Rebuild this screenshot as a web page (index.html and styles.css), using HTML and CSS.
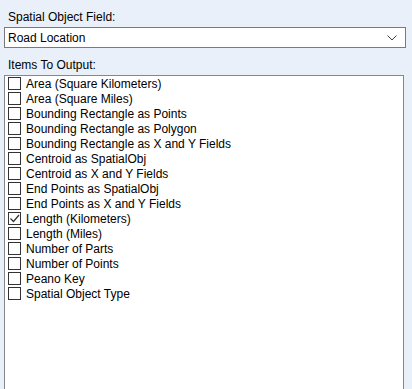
FILE: index.html
```html
<!DOCTYPE html>
<html>
<head>
<meta charset="utf-8">
<link rel="stylesheet" href="styles.css">
</head>
<body>
<div class="panel">
  <div class="label">Spatial Object Field:</div>
  <div class="combo">
    <span class="combo-text">Road Location</span>
    <svg class="chev" width="10" height="6" viewBox="0 0 10 6"><path d="M0.5 0.5 L5 5 L9.5 0.5" fill="none" stroke="#444" stroke-width="1"/></svg>
  </div>
  <div class="label label2">Items To Output:</div>
  <div class="list">
    <div class="item"><span class="cb"></span>Area (Square Kilometers)</div>
    <div class="item"><span class="cb"></span>Area (Square Miles)</div>
    <div class="item"><span class="cb"></span>Bounding Rectangle as Points</div>
    <div class="item"><span class="cb"></span>Bounding Rectangle as Polygon</div>
    <div class="item"><span class="cb"></span>Bounding Rectangle as X and Y Fields</div>
    <div class="item"><span class="cb"></span>Centroid as SpatialObj</div>
    <div class="item"><span class="cb"></span>Centroid as X and Y Fields</div>
    <div class="item"><span class="cb"></span>End Points as SpatialObj</div>
    <div class="item"><span class="cb"></span>End Points as X and Y Fields</div>
    <div class="item"><span class="cb checked"><svg width="11" height="11" viewBox="0 0 11 11"><path d="M1.5 5.5 L4.5 8.5 L10 2" fill="none" stroke="#333" stroke-width="1.2"/></svg></span>Length (Kilometers)</div>
    <div class="item"><span class="cb"></span>Length (Miles)</div>
    <div class="item"><span class="cb"></span>Number of Parts</div>
    <div class="item"><span class="cb"></span>Number of Points</div>
    <div class="item"><span class="cb"></span>Peano Key</div>
    <div class="item"><span class="cb"></span>Spatial Object Type</div>
  </div>
</div>
</body>
</html>
```
FILE: styles.css
```css
html, body {
  margin: 0;
  padding: 0;
  background: #eaf0fa;
  height: 100%;
  overflow: hidden;
}
.panel {
  box-sizing: border-box;
  height: 100%;
  font-family: "Liberation Sans", Arial, sans-serif;
  font-size: 12px;
  color: #000;
  padding: 10px 6px 0 4px;
  display: flex;
  flex-direction: column;
}
.label {
  padding-left: 4px;
  height: 17px;
  line-height: 15px;
}
.combo {
  height: 19px;
  border: 1px solid #7a7a7a;
  background: #fff;
  display: flex;
  align-items: center;
  justify-content: space-between;
  padding: 0 8px 0 3px;
}
.label2 {
  margin-top: 10px;
  height: 17px;
}
.list {
  flex: 1;
  background: #fff;
  border: 1px solid #828790;
  border-bottom: none;
  margin-right: 2px;
}
.item {
  display: flex;
  align-items: center;
  height: 15px;
  padding-left: 3px;
  white-space: nowrap;
}
.cb {
  width: 11px;
  height: 11px;
  border: 1px solid #333;
  background: #fff;
  margin-right: 5px;
  display: flex;
  align-items: center;
  justify-content: center;
  flex: none;
}
.cb svg { display: block; }
```
